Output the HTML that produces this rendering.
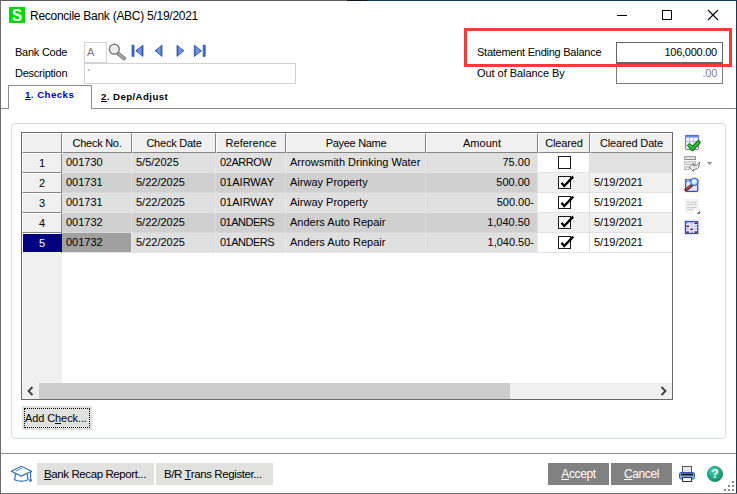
<!DOCTYPE html>
<html>
<head>
<meta charset="utf-8">
<title>Reconcile Bank</title>
<style>
html,body{margin:0;padding:0;background:#fff;}
body{width:737px;height:494px;position:relative;overflow:hidden;font-family:"Liberation Sans",sans-serif;font-size:11px;color:#000;letter-spacing:-0.25px;}
.a{position:absolute;white-space:nowrap;}
.t{position:absolute;white-space:nowrap;line-height:14px;height:14px;}
u{text-decoration:underline;text-underline-offset:1px;}
/* grid */
.hc{letter-spacing:0;position:absolute;box-sizing:border-box;background:#f0f0f0;border-top:1px solid #fff;border-left:1px solid #fff;border-right:1px solid #858585;border-bottom:1px solid #858585;text-align:center;line-height:18px;font-size:11px;}
.c{letter-spacing:0;position:absolute;box-sizing:border-box;height:20px;line-height:19px;padding-left:4px;overflow:hidden;white-space:nowrap;}
.r{text-align:right;padding-left:0;}
.cb{position:absolute;width:11px;height:11px;border:1px solid #1a1a1a;background:#fff;}
.btn{position:absolute;box-sizing:border-box;background:#e1e1e1;text-align:center;}
</style>
</head>
<body>
<!-- window frame -->
<div class="a" style="left:0;top:0;width:347px;height:1px;background:#5e5e5e;"></div>
<div class="a" style="left:347px;top:0;width:20px;height:1px;background:#0c1519;"></div>
<div class="a" style="left:367px;top:0;width:370px;height:1px;background:#143b5f;"></div>
<div class="a" style="left:0;top:0;width:1px;height:494px;background:#6a6d6a;"></div>
<div class="a" style="left:736px;top:0;width:1px;height:494px;background:#17364f;"></div>
<div class="a" style="left:0;top:493px;width:737px;height:1px;background:#6f6f6f;"></div>

<!-- title bar -->
<div class="a" style="left:9px;top:7px;width:16px;height:16px;background:#00d900;"></div>
<div class="a" style="left:9px;top:7px;width:16px;height:16px;line-height:16px;text-align:center;color:#fff;font-weight:bold;font-size:16.5px;letter-spacing:0;transform:scaleX(0.92);">S</div>
<div class="t" style="left:30px;top:9px;font-size:12px;letter-spacing:-0.27px;">Reconcile Bank (ABC) 5/19/2021</div>
<svg class="a" style="left:610px;top:5px;" width="120" height="20" viewBox="0 0 120 20">
  <path d="M7 10.5H17" stroke="#000" stroke-width="1" fill="none"/>
  <rect x="52.5" y="5.5" width="9" height="9" stroke="#000" stroke-width="1" fill="none"/>
  <path d="M98 5L108 15M108 5L98 15" stroke="#000" stroke-width="1.1" fill="none"/>
</svg>

<!-- header fields -->
<div class="t" style="left:15px;top:45px;">Bank Code</div>
<div class="a" style="left:84px;top:42px;width:21px;height:19px;border:1px solid #d2d2d2;background:#fff;"></div>
<div class="t" style="left:87px;top:45px;color:#7a7a7a;">A</div>
<div class="t" style="left:15px;top:66px;">Description</div>
<div class="a" style="left:84px;top:63px;width:210px;height:19px;border:1px solid #d2d2d2;background:#fff;"></div>
<div class="t" style="left:87px;top:67px;color:#555;">`</div>

<!-- lookup + nav icons -->
<svg class="a" style="left:108px;top:43px;" width="100" height="18" viewBox="0 0 100 18">
  <defs>
    <linearGradient id="nl" x1="0" y1="0" x2="1" y2="0"><stop offset="0" stop-color="#2f55b8"/><stop offset="0.55" stop-color="#7d9fe8"/><stop offset="1" stop-color="#3a60c4"/></linearGradient>
    <linearGradient id="nr" x1="1" y1="0" x2="0" y2="0"><stop offset="0" stop-color="#2f55b8"/><stop offset="0.55" stop-color="#7d9fe8"/><stop offset="1" stop-color="#3a60c4"/></linearGradient>
  </defs>
  <path d="M10.2 10.6L16 15.4" stroke="#6e6e6e" stroke-width="3.8" stroke-linecap="round"/>
  <path d="M10.2 10.6L16 15.4" stroke="#a9a9a9" stroke-width="2" stroke-linecap="round"/>
  <circle cx="6.3" cy="6.2" r="4.9" fill="#e9e9e9" stroke="#7b7b7b" stroke-width="1.5"/>
  <circle cx="6.3" cy="6.2" r="3.4" fill="none" stroke="#f6f6f6" stroke-width="1"/>
  <g stroke="#2a4cab" stroke-width="0.8" stroke-linejoin="round">
    <rect x="24" y="2.2" width="2" height="11.2" fill="#4a70cf"/>
    <path d="M35 2.2V13.4L27.8 7.8Z" fill="url(#nl)"/>
    <path d="M54 2.2V13.4L47.2 7.8Z" fill="url(#nl)"/>
    <path d="M69 2.2V13.4L75.8 7.8Z" fill="url(#nr)"/>
    <path d="M86.3 2.2V13.4L93.5 7.8Z" fill="url(#nr)"/>
    <rect x="95.2" y="2.2" width="2" height="11.2" fill="#4a70cf"/>
  </g>
</svg>

<!-- statement ending balance -->
<div class="t" style="left:477px;top:45px;">Statement Ending Balance</div>
<div class="t" style="left:477px;top:66px;letter-spacing:-0.05px;">Out of Balance By</div>
<div class="a" style="left:616px;top:42px;width:105px;height:19px;border:1px solid #646464;background:#fff;"></div>
<div class="a" style="left:616px;top:63px;width:105px;height:19px;border:1px solid #7a7a7a;border-top:1px solid #646464;background:#fff;"></div>
<div class="t" style="left:616px;top:45px;width:101px;text-align:right;">106,000.00</div>
<div class="t" style="left:616px;top:66px;width:101px;text-align:right;color:#7f7f7f;">.00</div>
<div class="a" style="left:464px;top:28px;width:262px;height:33px;border:3px solid #f73b3b;"></div>

<!-- tabs -->
<div class="a" style="left:1px;top:108px;width:735px;height:1px;background:#8c8c8c;"></div>
<div class="a" style="left:8px;top:85px;width:82px;height:23px;border:1px solid #8c8c8c;border-bottom:none;background:#fff;"></div>
<div class="t" style="left:25px;top:88px;font-weight:bold;font-size:9.7px;letter-spacing:0.45px;color:#0000c8;"><u>1</u>. Checks</div>
<div class="t" style="left:101px;top:90px;font-weight:bold;font-size:9.7px;letter-spacing:0.4px;"><u>2</u>. Dep/Adjust</div>

<!-- group box -->
<div class="a" style="left:11px;top:123px;width:713px;height:314px;border:1px solid #d3dde4;border-radius:4px;"></div>

<!-- grid -->
<div class="a" style="left:21px;top:132px;width:650px;height:266px;border:1px solid #6a6a6a;background:#fff;"></div>
<div class="a" style="left:22px;top:133px;width:40px;height:250px;background:#f0f0f0;border-left:1px solid #fff;box-sizing:border-box;"></div>
<!-- header row -->
<div class="hc" style="left:22px;top:133px;width:40px;height:20px;"></div>
<div class="hc" style="left:62px;top:133px;width:70px;height:20px;letter-spacing:-0.27px;">Check No.</div>
<div class="hc" style="left:132px;top:133px;width:84px;height:20px;letter-spacing:-0.23px;">Check Date</div>
<div class="hc" style="left:216px;top:133px;width:70px;height:20px;">Reference</div>
<div class="hc" style="left:286px;top:133px;width:140px;height:20px;letter-spacing:-0.3px;">Payee Name</div>
<div class="hc" style="left:426px;top:133px;width:112px;height:20px;">Amount</div>
<div class="hc" style="left:538px;top:133px;width:52px;height:20px;letter-spacing:-0.15px;">Cleared</div>
<div class="hc" style="left:590px;top:133px;width:82px;height:20px;border-right:none;letter-spacing:-0.15px;">Cleared Date</div>
<!-- row headers -->
<div class="hc" style="left:22px;top:153px;width:40px;height:20px;line-height:19px;">1</div>
<div class="hc" style="left:22px;top:173px;width:40px;height:20px;line-height:19px;">2</div>
<div class="hc" style="left:22px;top:193px;width:40px;height:20px;line-height:19px;">3</div>
<div class="hc" style="left:22px;top:213px;width:40px;height:20px;line-height:19px;">4</div>
<div class="hc" style="left:22px;top:233px;width:40px;height:20px;line-height:19px;background:#000080;color:#fff;border-right-color:#000080;border-bottom-color:#f0f0f0;">5</div>

<!-- row 1 -->
<div class="c" style="left:62px;top:153px;width:476px;background:#e0e0e0;"></div>
<div class="c" style="left:62px;top:153px;width:70px;">001730</div>
<div class="c" style="left:132px;top:153px;width:84px;">5/5/2025</div>
<div class="c" style="left:216px;top:153px;width:70px;letter-spacing:-0.43px;">02ARROW</div>
<div class="c" style="left:286px;top:153px;width:140px;">Arrowsmith Drinking Water</div>
<div class="c r" style="left:426px;top:153px;width:104px;">75.00</div>
<div class="c" style="left:590px;top:153px;width:82px;background:#e1e1e1;"></div>
<!-- row 2 -->
<div class="c" style="left:62px;top:173px;width:476px;background:#d0d0d0;"></div>
<div class="c" style="left:62px;top:173px;width:70px;">001731</div>
<div class="c" style="left:132px;top:173px;width:84px;">5/22/2025</div>
<div class="c" style="left:216px;top:173px;width:70px;">01AIRWAY</div>
<div class="c" style="left:286px;top:173px;width:140px;">Airway Property</div>
<div class="c r" style="left:426px;top:173px;width:104px;">500.00</div>
<div class="c" style="left:538px;top:173px;width:134px;background:#f0f0f0;"></div>
<div class="c" style="left:590px;top:173px;width:82px;">5/19/2021</div>
<!-- row 3 -->
<div class="c" style="left:62px;top:193px;width:476px;background:#e0e0e0;"></div>
<div class="c" style="left:62px;top:193px;width:70px;">001731</div>
<div class="c" style="left:132px;top:193px;width:84px;">5/22/2025</div>
<div class="c" style="left:216px;top:193px;width:70px;">01AIRWAY</div>
<div class="c" style="left:286px;top:193px;width:140px;">Airway Property</div>
<div class="c r" style="left:426px;top:193px;width:108px;">500.00-</div>
<div class="c" style="left:590px;top:193px;width:82px;">5/19/2021</div>
<!-- row 4 -->
<div class="c" style="left:62px;top:213px;width:476px;background:#d0d0d0;"></div>
<div class="c" style="left:62px;top:213px;width:70px;">001732</div>
<div class="c" style="left:132px;top:213px;width:84px;">5/22/2025</div>
<div class="c" style="left:216px;top:213px;width:70px;letter-spacing:-0.5px;">01ANDERS</div>
<div class="c" style="left:286px;top:213px;width:140px;">Anders Auto Repair</div>
<div class="c r" style="left:426px;top:213px;width:104px;">1,040.50</div>
<div class="c" style="left:538px;top:213px;width:134px;background:#f0f0f0;"></div>
<div class="c" style="left:590px;top:213px;width:82px;">5/19/2021</div>
<!-- row 5 -->
<div class="c" style="left:62px;top:233px;width:476px;background:#e0e0e0;"></div>
<div class="c" style="left:62px;top:233px;width:69px;height:19px;background:#a0a0a0;">001732</div>
<div class="c" style="left:132px;top:233px;width:84px;">5/22/2025</div>
<div class="c" style="left:216px;top:233px;width:70px;letter-spacing:-0.5px;">01ANDERS</div>
<div class="c" style="left:286px;top:233px;width:140px;">Anders Auto Repair</div>
<div class="c r" style="left:426px;top:233px;width:108px;">1,040.50-</div>
<div class="c" style="left:590px;top:233px;width:82px;">5/19/2021</div>

<!-- subtle gridlines -->
<div class="a" style="left:131px;top:153px;width:1px;height:100px;background:rgba(255,255,255,0.22);"></div>
<div class="a" style="left:215px;top:153px;width:1px;height:100px;background:rgba(255,255,255,0.22);"></div>
<div class="a" style="left:285px;top:153px;width:1px;height:100px;background:rgba(255,255,255,0.22);"></div>
<div class="a" style="left:425px;top:153px;width:1px;height:100px;background:rgba(255,255,255,0.22);"></div>
<div class="a" style="left:537px;top:153px;width:1px;height:100px;background:rgba(255,255,255,0.3);"></div>
<div class="a" style="left:589px;top:153px;width:1px;height:100px;background:#dedede;"></div>
<div class="a" style="left:62px;top:172px;width:476px;height:1px;background:rgba(255,255,255,0.18);"></div>
<div class="a" style="left:62px;top:192px;width:476px;height:1px;background:rgba(255,255,255,0.18);"></div>
<div class="a" style="left:62px;top:212px;width:476px;height:1px;background:rgba(255,255,255,0.18);"></div>
<div class="a" style="left:62px;top:232px;width:476px;height:1px;background:rgba(255,255,255,0.18);"></div>
<div class="a" style="left:62px;top:252px;width:476px;height:1px;background:rgba(255,255,255,0.18);"></div>
<div class="a" style="left:538px;top:172px;width:134px;height:1px;background:#e2e2e2;"></div>
<div class="a" style="left:538px;top:192px;width:134px;height:1px;background:#e2e2e2;"></div>
<div class="a" style="left:538px;top:212px;width:134px;height:1px;background:#e2e2e2;"></div>
<div class="a" style="left:538px;top:232px;width:134px;height:1px;background:#e2e2e2;"></div>
<div class="a" style="left:538px;top:252px;width:134px;height:1px;background:#e2e2e2;"></div>

<!-- checkboxes -->
<div class="cb" style="left:558px;top:156px;"></div>
<div class="cb" style="left:558px;top:176px;"></div>
<div class="cb" style="left:558px;top:196px;"></div>
<div class="cb" style="left:558px;top:216px;"></div>
<div class="cb" style="left:558px;top:236px;"></div>
<svg class="a" style="left:556px;top:173px;" width="20" height="80" viewBox="0 0 20 80">
  <g stroke="#000" stroke-width="2.4" fill="none" stroke-linejoin="miter">
    <path d="M5.5 9.7L8.2 13L17.2 3.6"/>
    <path d="M5.5 29.7L8.2 33L17.2 23.6"/>
    <path d="M5.5 49.7L8.2 53L17.2 43.6"/>
    <path d="M5.5 69.7L8.2 73L17.2 63.6"/>
  </g>
</svg>

<!-- horizontal scrollbar -->
<div class="a" style="left:22px;top:383px;width:650px;height:16px;background:#f0f0f0;"></div>
<div class="a" style="left:39px;top:383px;width:471px;height:16px;background:#cdcdcd;"></div>
<svg class="a" style="left:22px;top:383px;" width="650" height="16" viewBox="0 0 650 16">
  <path d="M10.5 4L6.5 8L10.5 12" stroke="#3c3c3c" stroke-width="1.8" fill="none"/>
  <path d="M639.5 4L643.5 8L639.5 12" stroke="#3c3c3c" stroke-width="1.8" fill="none"/>
</svg>

<!-- side icons -->
<svg class="a" style="left:684px;top:134px;" width="32" height="104" viewBox="0 0 32 104">
  <defs>
    <linearGradient id="th" x1="0" y1="0" x2="0" y2="1"><stop offset="0" stop-color="#4a62c4"/><stop offset="1" stop-color="#86a6f0"/></linearGradient>
    <linearGradient id="ck" x1="0" y1="0" x2="1" y2="1"><stop offset="0" stop-color="#4fe04f"/><stop offset="1" stop-color="#12a012"/></linearGradient>
    <radialGradient id="ln" cx="0.4" cy="0.35" r="0.7"><stop offset="0" stop-color="#ffffff"/><stop offset="1" stop-color="#9ccdf6"/></radialGradient>
  </defs>
  <!-- icon 1 : grid with check -->
  <rect x="0.2" y="0.6" width="15.8" height="16.4" fill="#f7f0dc"/>
  <rect x="1.6" y="1.4" width="12.8" height="14" rx="1" fill="#fbfbff" stroke="#6a6dbb" stroke-width="1"/>
  <rect x="1.2" y="1" width="13.6" height="2.8" rx="0.8" fill="url(#th)"/>
  <path d="M5.6 4V15.4M9.9 4V15.4M1.6 7.5H14.4M1.6 11.4H14.4" stroke="#b4b4e4" stroke-width="1" fill="none"/>
  <path d="M5.4 11.4L8.4 14.9L14.6 8.2" stroke="#0a6a0a" stroke-width="4.2" fill="none" stroke-linecap="round" stroke-linejoin="round"/>
  <path d="M5.4 11.4L8.4 14.9L14.6 8.2" stroke="url(#ck)" stroke-width="2.4" fill="none" stroke-linecap="round" stroke-linejoin="round"/>
  <!-- icon 2 : rows with arrow (disabled) -->
  <rect x="0.7" y="22.7" width="10.8" height="2.8" fill="#ececec" stroke="#8e8e8e" stroke-width="1"/>
  <rect x="0.7" y="27.8" width="10.8" height="2.6" fill="#f1f1f1" stroke="#b4b4b4" stroke-width="1"/>
  <rect x="0.7" y="32.7" width="4.4" height="2.8" fill="#f1f1f1" stroke="#b4b4b4" stroke-width="1"/>
  <path d="M5.2 33.4L9.6 29.4V31.6C12.6 31.6 14.6 30.6 15.3 28V31.5C15 34.2 12.6 35.6 9.6 35.6V37.6Z" fill="#e9e9e9" stroke="#5e5e5e" stroke-width="0.8" stroke-linejoin="round"/>
  <path d="M23 28H28.2L25.6 31Z" fill="#8f8f8f"/>
  <!-- icon 3 : window with magnifier -->
  <rect x="0" y="43" width="16" height="16" fill="#f5efd9"/>
  <rect x="1.7" y="45.5" width="12" height="11.8" rx="0.8" fill="#e2e3f9" stroke="#2f55b9" stroke-width="1.2"/>
  <rect x="1.2" y="45" width="13" height="2.6" rx="0.8" fill="#3b5fc4"/>
  <path d="M2.6 46.2H5.4" stroke="#fff" stroke-width="0.9"/>
  <path d="M7.6 51.4L2 55.8" stroke="#7b1f1f" stroke-width="3.2" stroke-linecap="round"/>
  <path d="M7 51.6L2.4 55.1" stroke="#c98787" stroke-width="0.9" stroke-linecap="round"/>
  <circle cx="10.3" cy="47.8" r="3.5" fill="url(#ln)" stroke="#2f7fd6" stroke-width="1.3"/>
  <!-- icon 4 : disabled page -->
  <path d="M0.9 65.1H14.7V75H11V78.5H0.9Z" fill="#f2f2f2"/>
  <path d="M3 68.4H5M6 68.4H12.6M3 70.6H8.6M9.6 70.6H12.6M3 73.5H6M7 73.5H12.6M3 75.6H8.6" stroke="#cbcbcb" stroke-width="1" fill="none"/>
  <path d="M16 76.6V80H12.6Z" fill="#777"/>
  <!-- icon 5 : grid with red marks -->
  <rect x="0" y="85" width="15.8" height="15.8" fill="#f1f1f1"/>
  <rect x="1.5" y="87.6" width="12.2" height="11.8" fill="#c9ccf0" stroke="#2e4eb1" stroke-width="1.3"/>
  <path d="M5.5 88V99M9.6 88V99M2 90.6H13.4M2 93.5H13.4M2 96.4H13.4" stroke="#e9eafa" stroke-width="0.8" fill="none"/>
  <path d="M10.4 89.3H13M2.4 92.3H5M6.4 95.3H9M2.4 98.1H5M10.4 98.1H13" stroke="#7c1212" stroke-width="1.3" fill="none"/>
</svg>

<!-- Add Check button -->
<div class="btn" style="left:22px;top:406px;width:70px;height:24px;background:#e1e1df;"></div>
<div class="a" style="left:24px;top:408px;width:64px;height:18px;border:1px dotted #000;border-radius:1px;"></div>
<div class="t" style="left:25px;top:411px;letter-spacing:-0.1px;">Add C<u>h</u>eck...</div>

<!-- bottom bar -->
<div class="a" style="left:1px;top:453px;width:735px;height:1px;background:#8e8e8e;"></div>
<svg class="a" style="left:10px;top:463px;" width="24" height="22" viewBox="0 0 24 22">
  <g fill="none" stroke="#3674b6" stroke-width="1.25" stroke-linejoin="round" stroke-linecap="round">
    <path d="M1.3 8.3L11.3 3.3L21.6 8.3L11.3 13.1Z"/>
    <path d="M5.6 10.6L4.6 16.6C7 18.7 15.6 18.7 18 16.6L17.2 10.6"/>
    <path d="M6.4 8L11.4 5.2" stroke-width="0.9"/>
    <path d="M20.6 8.8V16.5"/>
  </g>
  <rect x="19.2" y="16.4" width="2.6" height="2.2" fill="#3674b6"/>
</svg>
<div class="btn" style="left:37px;top:463px;width:117px;height:22px;background:#e1e1df;"></div>
<div class="t" style="left:44px;top:467px;font-size:11.5px;letter-spacing:-0.4px;"><u>B</u>ank Recap Report...</div>
<div class="btn" style="left:156px;top:463px;width:117px;height:22px;background:#e1e1df;"></div>
<div class="t" style="left:164px;top:467px;font-size:11.5px;letter-spacing:-0.4px;">B/R <u>T</u>rans Register...</div>

<div class="btn" style="left:548px;top:463px;width:61px;height:22px;background:#818181;"></div>
<div class="t" style="left:548px;top:467px;width:61px;text-align:center;color:#fff;font-size:12px;letter-spacing:-0.4px;"><u>A</u>ccept</div>
<div class="btn" style="left:611px;top:463px;width:61px;height:22px;background:#818181;"></div>
<div class="t" style="left:611px;top:467px;width:61px;text-align:center;color:#fff;font-size:12px;letter-spacing:-0.4px;"><u>C</u>ancel</div>

<!-- printer -->
<svg class="a" style="left:679px;top:466px;" width="17" height="17" viewBox="0 0 17 17">
  <rect x="3.5" y="0.5" width="9" height="7" fill="#e6e6e6" stroke="#555" stroke-width="1"/>
  <rect x="0.5" y="6.5" width="15" height="6.5" rx="1.5" fill="#7fb0ee" stroke="#2f5fb0" stroke-width="1"/>
  <rect x="2" y="7.5" width="12" height="2" fill="#1a1a1a"/>
  <rect x="3.5" y="11.5" width="9" height="4" fill="#f4f4f4" stroke="#333" stroke-width="1"/>
</svg>
<!-- help -->
<svg class="a" style="left:707px;top:466px;" width="16" height="16" viewBox="0 0 16 16">
  <defs><radialGradient id="hg" cx="0.4" cy="0.3" r="0.8"><stop offset="0" stop-color="#4fd0ad"/><stop offset="0.6" stop-color="#1fa684"/><stop offset="1" stop-color="#0c7f63"/></radialGradient></defs>
  <circle cx="8" cy="8" r="7.6" fill="url(#hg)" stroke="#0d8a6a" stroke-width="0.8"/>
  <text x="8" y="12.2" text-anchor="middle" font-family="Liberation Sans, sans-serif" font-weight="bold" font-size="12" fill="#fff" letter-spacing="0">?</text>
</svg>
<!-- resize grip -->
<svg class="a" style="left:723px;top:480px;" width="12" height="12" viewBox="0 0 12 12">
  <g fill="#8c8c8c">
    <rect x="9" y="1" width="2" height="2"/>
    <rect x="9" y="5" width="2" height="2"/><rect x="5" y="5" width="2" height="2"/>
    <rect x="9" y="9" width="2" height="2"/><rect x="5" y="9" width="2" height="2"/><rect x="1" y="9" width="2" height="2"/>
  </g>
</svg>
</body>
</html>
